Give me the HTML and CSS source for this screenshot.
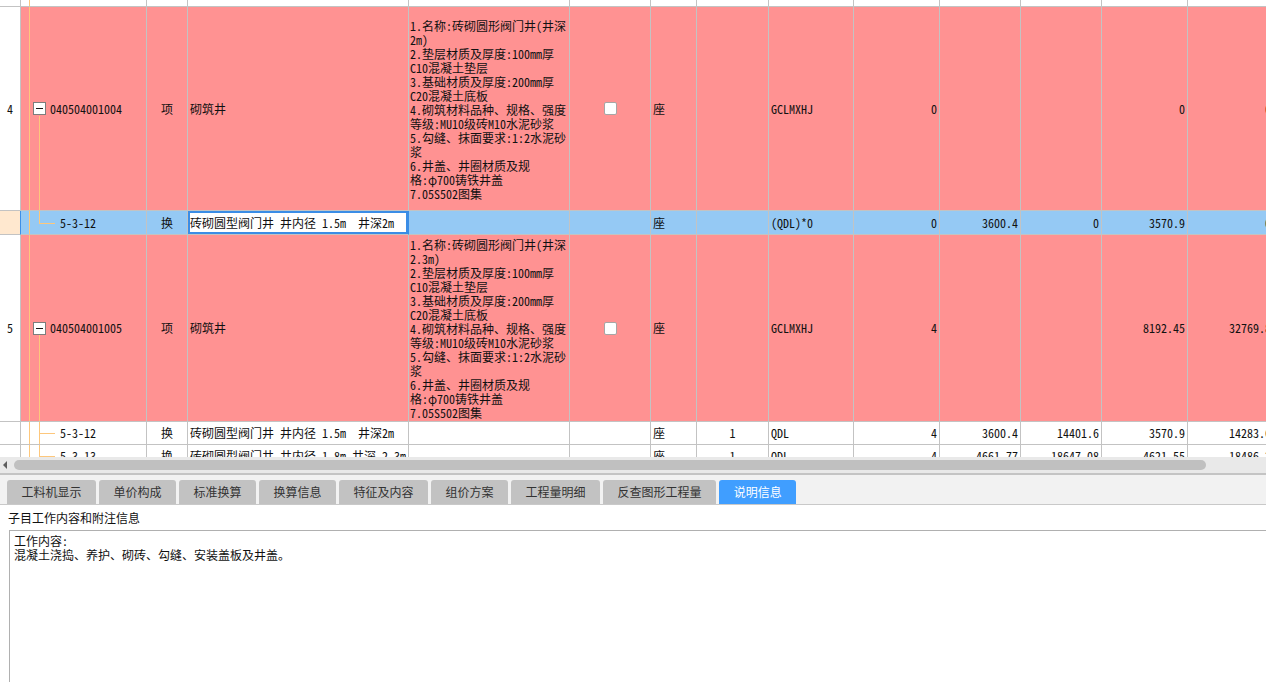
FILE: index.html
```html
<!DOCTYPE html>
<html lang="zh-CN">
<head>
<meta charset="utf-8">
<title>说明信息</title>
<link rel="stylesheet" href="styles.css">
</head>
<body>
<div class="grid-view">
  <div class="row row-top">
    <div class="c"></div><div class="c tree"></div><div class="c"></div><div class="c"></div><div class="c"></div><div class="c"></div><div class="c"></div><div class="c"></div><div class="c"></div><div class="c"></div><div class="c"></div><div class="c"></div><div class="c"></div><div class="c"></div>
  </div>

  <div class="row row-parent row-h4">
    <div class="c num">4</div>
    <div class="c tree parent"><span class="branch-down"></span><span class="expander"></span><span>040504001004</span></div>
    <div class="c center">项</div>
    <div class="c pl">砌筑井</div>
    <div class="c desc">
      <div>1.名称:砖砌圆形阀门井(井深</div>
      <div>2m)</div>
      <div>2.垫层材质及厚度:100mm厚</div>
      <div>C10混凝土垫层</div>
      <div>3.基础材质及厚度:200mm厚</div>
      <div>C20混凝土底板</div>
      <div>4.砌筑材料品种、规格、强度</div>
      <div>等级:MU10级砖M10水泥砂浆</div>
      <div>5.勾缝、抹面要求:1:2水泥砂</div>
      <div>浆</div>
      <div>6.井盖、井圈材质及规</div>
      <div>格:φ700铸铁井盖</div>
      <div>7.05S502图集</div>
    </div>
    <div class="c center"><span class="checkbox"></span></div>
    <div class="c pl">座</div>
    <div class="c"></div>
    <div class="c pl">GCLMXHJ</div>
    <div class="c right">0</div>
    <div class="c"></div>
    <div class="c"></div>
    <div class="c right">0</div>
    <div class="c right">0</div>
  </div>

  <div class="row row-selected">
    <div class="c num sel-num"></div>
    <div class="c tree child last"><span class="branch-up"></span><span class="branch-h"></span><span>5-3-12</span></div>
    <div class="c center">换</div>
    <div class="c pl editing">砖砌圆型阀门井 井内径 1.5m  井深2m</div>
    <div class="c"></div>
    <div class="c"></div>
    <div class="c pl">座</div>
    <div class="c"></div>
    <div class="c pl">(QDL)*0</div>
    <div class="c right">0</div>
    <div class="c right">3600.4</div>
    <div class="c right">0</div>
    <div class="c right">3570.9</div>
    <div class="c right">0</div>
  </div>

  <div class="row row-parent row-h5">
    <div class="c num">5</div>
    <div class="c tree parent"><span class="branch-down"></span><span class="expander"></span><span>040504001005</span></div>
    <div class="c center">项</div>
    <div class="c pl">砌筑井</div>
    <div class="c desc">
      <div>1.名称:砖砌圆形阀门井(井深</div>
      <div>2.3m)</div>
      <div>2.垫层材质及厚度:100mm厚</div>
      <div>C10混凝土垫层</div>
      <div>3.基础材质及厚度:200mm厚</div>
      <div>C20混凝土底板</div>
      <div>4.砌筑材料品种、规格、强度</div>
      <div>等级:MU10级砖M10水泥砂浆</div>
      <div>5.勾缝、抹面要求:1:2水泥砂</div>
      <div>浆</div>
      <div>6.井盖、井圈材质及规</div>
      <div>格:φ700铸铁井盖</div>
      <div>7.05S502图集</div>
    </div>
    <div class="c center"><span class="checkbox"></span></div>
    <div class="c pl">座</div>
    <div class="c"></div>
    <div class="c pl">GCLMXHJ</div>
    <div class="c right">4</div>
    <div class="c"></div>
    <div class="c"></div>
    <div class="c right">8192.45</div>
    <div class="c right">32769.8</div>
  </div>

  <div class="row row-child">
    <div class="c num"></div>
    <div class="c tree child"><span class="branch-full"></span><span class="branch-h"></span><span>5-3-12</span></div>
    <div class="c center">换</div>
    <div class="c pl">砖砌圆型阀门井 井内径 1.5m  井深2m</div>
    <div class="c"></div>
    <div class="c"></div>
    <div class="c pl">座</div>
    <div class="c center">1</div>
    <div class="c pl">QDL</div>
    <div class="c right">4</div>
    <div class="c right">3600.4</div>
    <div class="c right">14401.6</div>
    <div class="c right">3570.9</div>
    <div class="c right">14283.6</div>
  </div>

  <div class="row row-child">
    <div class="c num"></div>
    <div class="c tree child last"><span class="branch-up"></span><span class="branch-h"></span><span>5-3-13</span></div>
    <div class="c center">换</div>
    <div class="c pl">砖砌圆型阀门井 井内径 1.8m 井深 2.3m</div>
    <div class="c"></div>
    <div class="c"></div>
    <div class="c pl">座</div>
    <div class="c center">1</div>
    <div class="c pl">QDL</div>
    <div class="c right">4</div>
    <div class="c right">4661.77</div>
    <div class="c right">18647.08</div>
    <div class="c right">4621.55</div>
    <div class="c right">18486.2</div>
  </div>
</div>

<div class="hscroll">
  <span class="arrow-left"></span>
  <span class="thumb"></span>
</div>

<div class="tabbar">
  <div class="tab">工料机显示</div>
  <div class="tab">单价构成</div>
  <div class="tab">标准换算</div>
  <div class="tab">换算信息</div>
  <div class="tab">特征及内容</div>
  <div class="tab">组价方案</div>
  <div class="tab">工程量明细</div>
  <div class="tab">反查图形工程量</div>
  <div class="tab active">说明信息</div>
</div>

<div class="info-label">子目工作内容和附注信息</div>
<div class="info-box">
  <div>工作内容:</div>
  <div>混凝土浇捣、养护、砌砖、勾缝、安装盖板及井盖。</div>
</div>
</body>
</html>
```

FILE: styles.css
```css
html, body {
  margin: 0;
  padding: 0;
}
body {
  width: 1266px;
  height: 682px;
  overflow: hidden;
  background: #ffffff;
  color: #111111;
  font-family: "Noto Sans Mono CJK SC", "Noto Sans CJK SC", "DejaVu Sans Mono", monospace;
  font-size: 12px;
}

.grid-view {
  height: 457px;
  overflow: hidden;
  background: #ffffff;
}

.row {
  display: grid;
  grid-template-columns: 21px 126px 41px 221px 161px 81px 46px 72px 85px 86px 81px 81px 86px 86px;
  width: 1274px;
}

.c {
  box-sizing: border-box;
  border-right: 1px solid #c3c3c3;
  border-bottom: 1px solid #c3c3c3;
  display: flex;
  align-items: center;
  overflow: hidden;
  white-space: pre;
  position: relative;
  line-height: 14px;
}

.row-top { height: 7px; }
.row-h4 { height: 204px; }
.row-selected { height: 24px; }
.row-h5 { height: 187px; }
.row-child { height: 23px; }

.row-parent .c { background: #ff9292; }
.row-parent .c.num { background: #ffffff; }
.row-selected .c { background: #95c9f4; }

.num { justify-content: center; }
.center { justify-content: center; }
.right { justify-content: flex-end; padding-right: 2px; }
.pl { padding-left: 2px; }

.desc {
  flex-direction: column;
  align-items: flex-start;
  justify-content: center;
  padding-left: 1px;
  padding-top: 2px;
}

.checkbox {
  width: 11px;
  height: 11px;
  background: #ffffff;
  border: 1px solid #a6a6a6;
  border-radius: 2px;
}

/* tree column */
.tree { padding-left: 12px; }
.tree::before {
  content: "";
  position: absolute;
  left: 8px;
  top: 0;
  bottom: 0;
  width: 1px;
  background: #fdc77c;
}
.tree.child { padding-left: 39px; }

.expander {
  width: 11px;
  height: 11px;
  border: 1px solid #7d7d7d;
  background: #ffffff;
  margin-right: 4px;
  position: relative;
  flex: none;
}
.expander::after {
  content: "";
  position: absolute;
  left: 2px;
  right: 2px;
  top: 5px;
  height: 1px;
  background: #1a1a1a;
}
.branch-down {
  position: absolute;
  left: 18px;
  top: calc(50% + 7px);
  bottom: 0;
  width: 1px;
  background: #fdc77c;
}
.branch-up {
  position: absolute;
  left: 18px;
  top: 0;
  height: 50%;
  width: 1px;
  background: #fdc77c;
}
.branch-full {
  position: absolute;
  left: 18px;
  top: 0;
  bottom: 0;
  width: 1px;
  background: #fdc77c;
}
.branch-h {
  position: absolute;
  left: 18px;
  top: 50%;
  width: 16px;
  height: 1px;
  background: #fdc77c;
}

.sel-num.c {
  background: #ffe8cf;
  border-right: 1px solid #3d8fe8;
}
.row-selected .editing.c {
  background: #ffffff;
  border-right: 1px solid #3a8de6;
  box-shadow: inset 0 0 0 2px #3a8de6;
  padding-left: 2px;
}

/* horizontal scrollbar */
.hscroll {
  height: 16px;
  background: #e9e9e9;
  border-bottom: 2px solid #c4c4c4;
  display: flex;
  align-items: center;
  position: relative;
}
.arrow-left {
  width: 0;
  height: 0;
  border-top: 4px solid transparent;
  border-bottom: 4px solid transparent;
  border-right: 4px solid #5e5e5e;
  margin-left: 3px;
}
.thumb {
  margin-left: 7px;
  width: 1192px;
  height: 10px;
  border-radius: 5px;
  background: #c0c0c0;
}

/* tabs */
.tabbar {
  height: 29px;
  background: #f2f2f2;
  border-bottom: 1px solid #c9c9c9;
  display: flex;
  align-items: flex-end;
  padding-left: 7px;
  font-family: "Noto Sans CJK SC", "Noto Sans", sans-serif;
}
.tab {
  height: 24px;
  line-height: 24px;
  padding: 0 14.5px;
  margin-right: 3px;
  background: #c2c2c2;
  color: #333333;
  border-radius: 3px 3px 0 0;
  font-size: 12px;
}
.tab.active {
  background: #409eff;
  color: #ffffff;
}

.info-label {
  height: 25px;
  line-height: 25px;
  padding-left: 8px;
  font-family: "Noto Sans CJK SC", "Noto Sans", sans-serif;
  font-size: 12px;
  color: #111111;
}
.info-box {
  margin-left: 9px;
  height: 148px;
  border-top: 1px solid #b0b0b0;
  border-left: 1px solid #b0b0b0;
  padding: 3px 0 0 4px;
  line-height: 14px;
  font-size: 12px;
  color: #111111;
}
```
